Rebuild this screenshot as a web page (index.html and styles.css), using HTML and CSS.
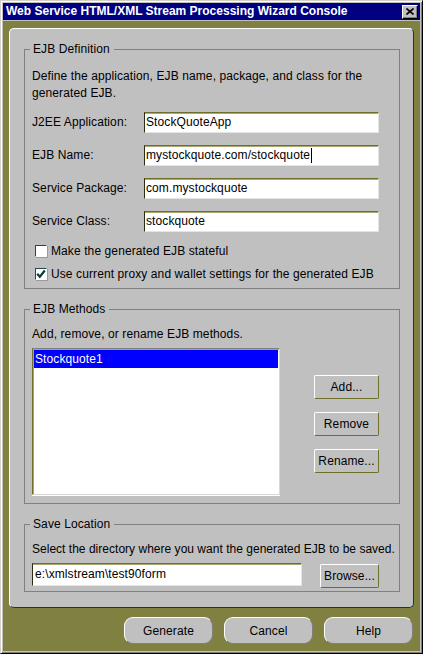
FILE: index.html
```html
<!DOCTYPE html>
<html>
<head>
<meta charset="utf-8">
<link rel="stylesheet" href="styles.css">
</head>
<body>
<div class="window">
  <div class="titlebar">
    <span class="title">Web Service HTML/XML Stream Processing Wizard Console</span>
    <span class="close"><svg width="8" height="7" viewBox="0 0 8 7"><path d="M0.5 0.5 L7.5 6.5 M7.5 0.5 L0.5 6.5" stroke="#000" stroke-width="1.6" fill="none"/></svg></span>
  </div>
  <div class="client">
    <div class="panel">
      <fieldset class="group def">
        <legend>EJB Definition</legend>
        <p class="desc">Define the application, EJB name, package, and class for the<br>generated EJB.</p>
        <div class="form">
          <span class="label">J2EE Application:</span><div class="field">StockQuoteApp</div>
          <span class="label">EJB Name:</span><div class="field">mystockquote.com/stockquote<span class="caret"></span></div>
          <span class="label">Service Package:</span><div class="field">com.mystockquote</div>
          <span class="label">Service Class:</span><div class="field">stockquote</div>
        </div>
        <div class="checks">
          <div class="check"><span class="box"></span>Make the generated EJB stateful</div>
          <div class="check"><span class="box"><svg width="10" height="10" viewBox="0 0 10 10"><path d="M1.2 4.8 L3.8 7.8 L8.8 1.5" stroke="#0c3c3c" stroke-width="2.2" fill="none"/></svg></span>Use current proxy and wallet settings for the generated EJB</div>
        </div>
      </fieldset>
      <fieldset class="group methods">
        <legend>EJB Methods</legend>
        <p class="desc">Add, remove, or rename EJB methods.</p>
        <div class="methods-row">
          <div class="list">
            <div class="item selected">Stockquote1</div>
          </div>
          <div class="side-buttons">
            <button class="btn">Add...</button>
            <button class="btn">Remove</button>
            <button class="btn">Rename...</button>
          </div>
        </div>
      </fieldset>
      <fieldset class="group save">
        <legend>Save Location</legend>
        <p class="desc tight">Select the directory where you want the generated EJB to be saved.</p>
        <div class="save-row">
          <div class="field path">e:\xmlstream\test90form</div>
          <button class="btn browse">Browse...</button>
        </div>
      </fieldset>
    </div>
    <div class="actions">
      <button class="pill">Generate</button>
      <button class="pill">Cancel</button>
      <button class="pill">Help</button>
    </div>
  </div>
</div>
</body>
</html>
```
FILE: styles.css
```css
* { box-sizing: border-box; }
html, body { margin: 0; padding: 0; }
body {
  width: 423px;
  height: 654px;
  font-family: "Liberation Sans", Arial, sans-serif;
  font-size: 12px;
  letter-spacing: 0.1px;
  color: #000;
  background: #c0c0c0;
}
.window {
  width: 423px;
  height: 654px;
  border: 1px solid;
  border-color: #d4d0c8 #000 #000 #d4d0c8;
  box-shadow: inset 1px 1px 0 #fff, inset -1px -1px 0 #808080;
  padding: 2px;
  background: #c0c0c0;
  display: flex;
  flex-direction: column;
}
.titlebar {
  height: 17px;
  margin-bottom: 1px;
  background: #000080;
  color: #fff;
  display: flex;
  align-items: center;
  justify-content: space-between;
  padding: 0 2px 0 3px;
}
.title {
  font-weight: bold;
  font-size: 12px;
  letter-spacing: 0;
  line-height: 17px;
  white-space: nowrap;
}
.close {
  width: 16px;
  height: 14px;
  background: #c0c0c0;
  border: 1px solid;
  border-color: #fff #000 #000 #fff;
  box-shadow: inset -1px -1px 0 #808080;
  display: flex;
  align-items: center;
  justify-content: center;
  padding-bottom: 1px;
}
.close svg { display: block; }
.client {
  flex: 1;
  background: #808040;
  padding: 7px 6px 6px 6px;
  display: flex;
  flex-direction: column;
}
.panel {
  background: #c0c0c0;
  border: 1px solid;
  border-color: #fff #0c3c3c #0c3c3c #fff;
  border-radius: 5px;
  padding: 13px 13px 15px 14px;
}
.group {
  margin: 0;
  border: 1px solid #808080;
  padding: 0 12px 0 7px;
  min-inline-size: 0;
}
.group legend {
  padding: 0 4px 0 3px;
  margin-left: -2px;
  line-height: 14px;
  height: 14px;
  font-size: 12px;
}
.group + .group { margin-top: 13px; }
.def { padding-top: 12px; padding-bottom: 3px; }
.methods { padding-top: 10px; padding-bottom: 8px; }
.save { padding-top: 10px; padding-bottom: 3px; }
.desc {
  margin: 0;
  line-height: 17px;
  white-space: nowrap;
}
.desc.tight { letter-spacing: 0.02px; }
.form {
  margin-top: 10px;
  display: grid;
  grid-template-columns: 112px 235px;
  grid-auto-rows: 21px;
  row-gap: 12px;
  align-items: center;
}
.label { line-height: 14px; position: relative; top: -1px; }
.field {
  height: 21px;
  background: #fff;
  border-style: solid;
  border-width: 1px;
  border-color: #6f6f2c #e4e4e4 #e4e4e4 #2c2c10;
  box-shadow: inset 0 1px 0 #a8a870;
  padding: 0 2px 0 1px;
  line-height: 19px;
  white-space: nowrap;
  display: flex;
  align-items: center;
}
.caret {
  display: inline-block;
  width: 1px;
  height: 15px;
  background: #000;
  margin-left: 1px;
}
.checks { margin-top: 7px; }
.check {
  height: 23px;
  display: flex;
  align-items: center;
  padding-left: 3px;
  white-space: nowrap;
}
.box {
  width: 12px;
  height: 12px;
  background: #fff;
  border: 1px solid;
  border-color: #204848 #fff #fff #204848;
  box-shadow: 1px 1px 0 #9a9a9a;
  margin-right: 4px;
  display: flex;
  align-items: center;
  justify-content: center;
}
.box svg { display: block; }
.methods-row {
  margin-top: 5px;
  display: flex;
  align-items: flex-start;
}
.list {
  width: 248px;
  height: 147px;
  background: #fff;
  border: 1px solid;
  border-color: #808080 #d8d8d8 #d8d8d8 #6f6f2c;
  box-shadow: inset 1px 1px 0 #a0a0a0, 0 1px 0 #fff;
  padding: 1px 1px 0 1px;
}
.item {
  height: 18px;
  line-height: 18px;
  padding-left: 1px;
}
.item.selected { background: #0000ff; color: #fff; }
.side-buttons {
  margin-left: 34px;
  margin-top: 27px;
  display: flex;
  flex-direction: column;
  gap: 13px;
}
.btn {
  font-family: "Liberation Sans", Arial, sans-serif;
  font-size: 12px;
  letter-spacing: 0.1px;
  color: #000;
  width: 65px;
  height: 24px;
  background: #c0c0c0;
  border: 1px solid;
  border-color: #fff #6f6f2c #6f6f2c #fff;
  border-radius: 2px;
  padding: 0;
  margin: 0;
  line-height: 22px;
}
.save-row {
  margin-top: 5px;
  display: flex;
  align-items: flex-start;
}
.path {
  width: 270px;
  height: 23px;
  padding-left: 2px;
}
.browse {
  width: 59px;
  margin-left: 18px;
  margin-top: 1px;
}
.actions {
  margin-top: 9px;
  display: flex;
  justify-content: flex-end;
  gap: 11px;
  padding-right: 1px;
}
.pill {
  font-family: "Liberation Sans", Arial, sans-serif;
  font-size: 12px;
  letter-spacing: 0.1px;
  color: #000;
  width: 89px;
  height: 27px;
  background: #c0c0c0;
  border: 1px solid;
  border-color: #fff #808080 #808080 #fff;
  border-radius: 9px;
  padding: 0;
  margin: 0;
}
```
